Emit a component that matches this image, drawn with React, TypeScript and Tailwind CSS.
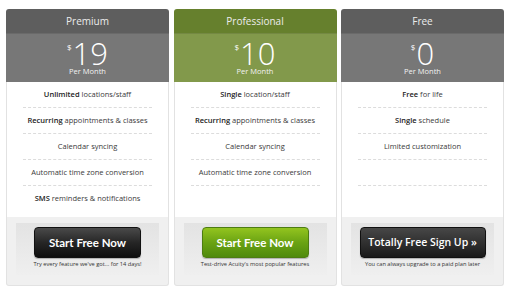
import React from "react";

type Feature = { bold?: string; rest?: string };

interface Plan {
  name: string;
  price: string;
  features: Feature[];
  cta: string;
  note: string;
  tone: "grey" | "green";
  ctaWide?: boolean;
}

const plans: Plan[] = [
  {
    name: "Premium",
    price: "19",
    tone: "grey",
    features: [
      { bold: "Unlimited", rest: " locations/staff" },
      { bold: "Recurring", rest: " appointments & classes" },
      { rest: "Calendar syncing" },
      { rest: "Automatic time zone conversion" },
      { bold: "SMS", rest: " reminders & notifications" },
    ],
    cta: "Start Free Now",
    note: "Try every feature we've got... for 14 days!",
  },
  {
    name: "Professional",
    price: "10",
    tone: "green",
    features: [
      { bold: "Single", rest: " location/staff" },
      { bold: "Recurring", rest: " appointments & classes" },
      { rest: "Calendar syncing" },
      { rest: "Automatic time zone conversion" },
      {},
    ],
    cta: "Start Free Now",
    note: "Test-drive Acuity's most popular features",
  },
  {
    name: "Free",
    price: "0",
    tone: "grey",
    ctaWide: true,
    features: [
      { bold: "Free", rest: " for life" },
      { bold: "Single", rest: " schedule" },
      { rest: "Limited customization" },
      {},
      {},
    ],
    cta: "Totally Free Sign Up »",
    note: "You can always upgrade to a paid plan later",
  },
];

function PlanCard({ plan }: { plan: Plan }) {
  const green = plan.tone === "green";
  return (
    <div className="w-[163px] flex flex-col">
      {/* title bar */}
      <div
        className={`h-[24px] rounded-t-[3px] flex items-center justify-center text-[10px] text-[#ececec] ${
          green ? "bg-[#66802d]" : "bg-[#5e5e5e]"
        }`}
      >
        {plan.name}
      </div>

      {/* price band */}
      <div
        className={`h-[49px] flex flex-col items-center text-white border-t border-black/10 ${
          green ? "bg-[#82994b]" : "bg-[#777777]"
        }`}
      >
        <div className="flex items-start mt-[7px]">
          <span className="text-[8px] leading-none mt-[2px] mr-[1px]">$</span>
          <span className="text-[31px] leading-[24px] font-light">{plan.price}</span>
        </div>
        <div className="text-[7.5px] leading-none mt-[3px] text-[#f2f2f2]">Per Month</div>
      </div>

      {/* features */}
      <div className="bg-white border-x border-[#e2e2e2] pb-[5px]">
        {plan.features.map((f, i) => (
          <div
            key={i}
            className={`mx-4 h-[26px] flex items-center justify-center text-[7.5px] text-[#3a3a3a] ${
              i < plan.features.length - 1 ? "border-b border-dashed border-[#dcdcdc]" : ""
            }`}
          >
            {f.bold && <span className="font-semibold text-[#222]">{f.bold}</span>}
            {f.rest && <span className="whitespace-pre">{f.rest}</span>}
          </div>
        ))}
      </div>

      {/* footer */}
      <div className="h-[69px] bg-[#f0f0f0] border border-t-0 border-[#e2e2e2] rounded-b-[3px] px-[9px] pt-[6px]">
        <div className="h-[52px] bg-gradient-to-b from-[#e3e3e3] to-[#efefef] flex flex-col items-center pt-[4px]">
          <button
            className={`h-[31px] rounded-[4px] flex items-center justify-center text-white shadow-[0_1px_1px_rgba(0,0,0,0.25)] ${
              plan.ctaWide
                ? "w-[126px] text-[10.5px] font-semibold border border-[#111] bg-[linear-gradient(to_bottom,#474747,#1a1a1a)]"
                : green
                ? "w-[107px] text-[11.5px] font-bold font-['Lato',sans-serif] border border-[#4d7d12] bg-[linear-gradient(to_bottom,#93c41f,#6aa313_50%,#4f8a0c)]"
                : "w-[107px] text-[11.5px] font-bold font-['Lato',sans-serif] border border-[#111] bg-[linear-gradient(to_bottom,#4a4a4a,#262626_50%,#0e0e0e)]"
            }`}
          >
            {plan.cta}
          </button>
          <div className="mt-[2px] text-[5.7px] text-[#333] whitespace-nowrap">{plan.note}</div>
        </div>
      </div>
    </div>
  );
}

export default function App() {
  return (
    <div className="w-[509px] h-[300px] bg-white font-['Open_Sans',sans-serif] pl-[6px] pt-[9px]">
      <div className="flex gap-[4.5px]">
        {plans.map((p) => (
          <PlanCard key={p.name} plan={p} />
        ))}
      </div>
    </div>
  );
}
